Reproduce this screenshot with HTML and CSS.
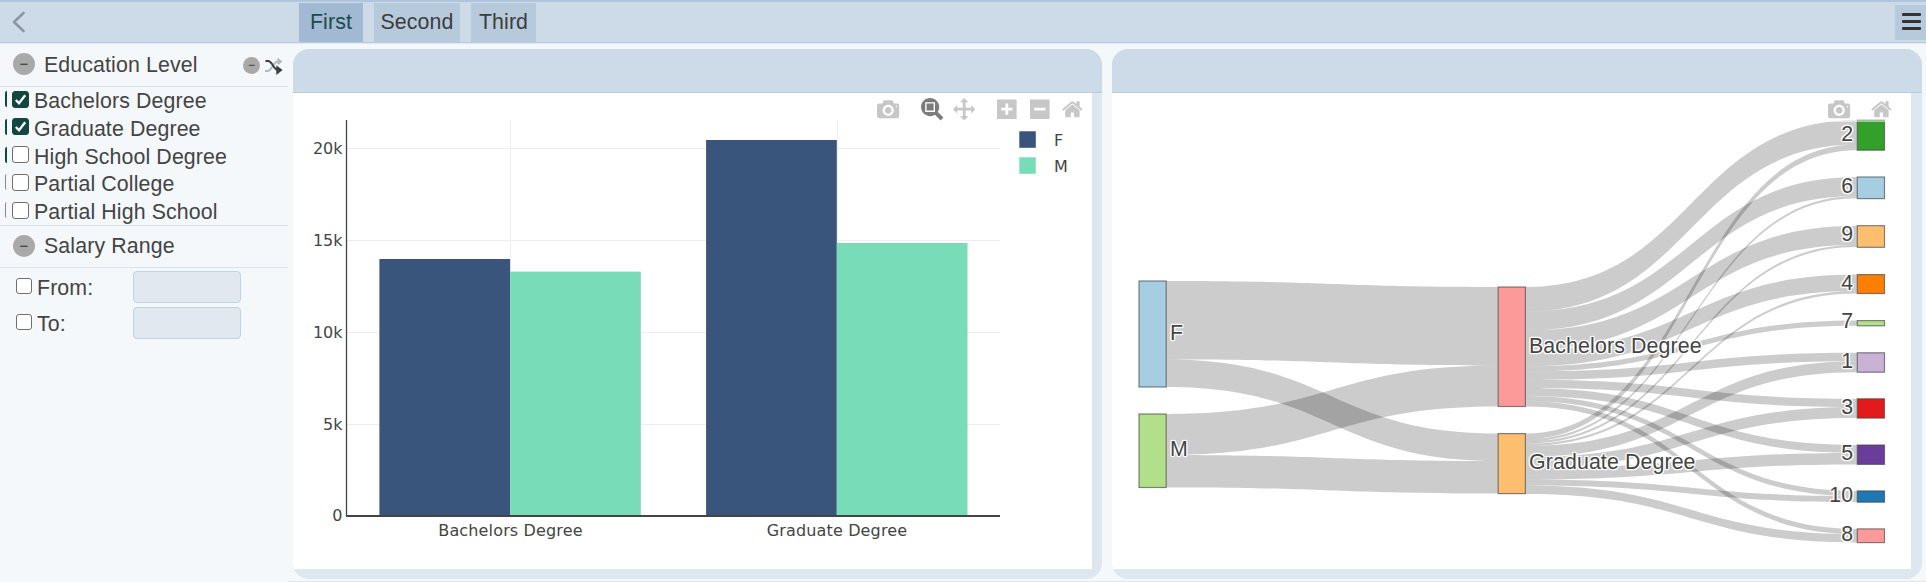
FILE: index.html
```html
<!DOCTYPE html>
<html lang="en">
<head>
<meta charset="utf-8">
<title>Dashboard</title>
<link rel="stylesheet" href="styles.css">
</head>
<body>
<header class="topbar">
  <div class="topbar-side">
    <svg class="chevron" width="14" height="22" viewBox="0 0 14 22"><path d="M11.500 2 2 11l9.500 9"/></svg>
  </div>
  <nav class="tabs">
    <span class="tab tab-first active">First</span>
    <span class="tab tab-second">Second</span>
    <span class="tab tab-third">Third</span>
  </nav>
  <div class="menu-button"><i></i><i></i><i></i></div>
</header>
<div class="workspace">
  <aside class="sidebar">
    <div class="group-head">
      <span class="round">−</span><span class="group-title">Education Level</span>
      <span class="round small">−</span>
      <svg class="shuffle" width="18" height="16" viewBox="0 0 18 16">
        <path class="pale" d="M0 13h2.500C7 13 8 3.500 13 3.500h2M12.500 .8 15.800 3.500l-3.300 2.700"/>
        <path class="dark" d="M.5 3H3c4.500 0 5.500 9 10 9h2M12.300 9.200l3.700 2.900-3.700 2.900z"/>
      </svg>
    </div>
    <div class="options">
      <label class="option"><i class="sliver on"></i><span class="box checked"><svg viewBox="0 0 16 16"><path d="M3 8.500 6.400 12 13 3.500"/></svg></span>Bachelors Degree</label>
      <label class="option"><i class="sliver on"></i><span class="box checked"><svg viewBox="0 0 16 16"><path d="M3 8.500 6.400 12 13 3.500"/></svg></span>Graduate Degree</label>
      <label class="option"><i class="sliver on"></i><span class="box"></span>High School Degree</label>
      <label class="option"><i class="sliver"></i><span class="box"></span>Partial College</label>
      <label class="option"><i class="sliver"></i><span class="box"></span>Partial High School</label>
    </div>
    <div class="group-head second">
      <span class="round">−</span><span class="group-title">Salary Range</span>
    </div>
    <div class="range">
      <div class="range-row"><span class="box"></span><span class="range-label">From:</span><span class="field"></span></div>
      <div class="range-row"><span class="box"></span><span class="range-label">To:</span><span class="field"></span></div>
    </div>
  </aside>
  <main class="main">
    <section class="panel">
      <div class="panel-head"></div>
      <div class="panel-body">
        <svg class="plot bars" width="799" height="476" viewBox="293 93 799 476">
          <path class="grid" d="M347 148.500H1000M347 240.500H1000M347 332.500H1000M347 424.500H1000M510.500 120V515M837.500 120V515"/>
          <g class="series-f"><rect x="379.400" y="259" width="130.700" height="257"/><rect x="706.100" y="140" width="130.700" height="376"/></g>
          <g class="series-m"><rect x="510.100" y="271.600" width="130.700" height="244.400"/><rect x="836.800" y="243" width="130.700" height="273"/></g>
          <path class="axis-y" d="M346.500 120V516"/>
          <path class="axis-x" d="M346 516H1000"/>
          <g class="tick end">
            <text x="342.500" y="154">20k</text><text x="342.500" y="246">15k</text><text x="342.500" y="338">10k</text><text x="342.500" y="430">5k</text><text x="342.500" y="521">0</text>
          </g>
          <g class="tick mid"><text x="510.500" y="536">Bachelors Degree</text><text x="837" y="536">Graduate Degree</text></g>
          <g class="series-f"><rect x="1019.300" y="131.300" width="16.500" height="16.500"/></g>
          <g class="series-m"><rect x="1019.300" y="157.300" width="16.500" height="16.500"/></g>
          <g class="tick"><text x="1054" y="146">F</text><text x="1054" y="172">M</text></g>
        </svg>
        <div class="modebar">
          <div class="modebar-group"><svg><use href="#i-camera"/></svg></div>
          <div class="modebar-group"><svg class="active"><use href="#i-zoom"/></svg><svg><use href="#i-pan"/></svg></div>
          <div class="modebar-group"><svg><use href="#i-plus"/></svg><svg><use href="#i-minus"/></svg><svg><use href="#i-home"/></svg></div>
        </div>
      </div>
    </section>
    <section class="panel">
      <div class="panel-head"></div>
      <div class="panel-body">
        <svg class="plot" width="799" height="476" viewBox="1112 93 799 476">
          <g id="links" class="links"></g>
          <g id="nodes" class="nodes"></g>
          <g class="node-labels">
            <text x="1170" y="340">F</text><text x="1170" y="456">M</text>
            <text x="1529" y="353">Bachelors Degree</text><text x="1529" y="469">Graduate Degree</text>
          </g>
          <g class="node-labels end">
            <text x="1853" y="141">2</text><text x="1853" y="193">6</text><text x="1853" y="241">9</text><text x="1853" y="290">4</text><text x="1853" y="328">7</text><text x="1853" y="368">1</text><text x="1853" y="414">3</text><text x="1853" y="460">5</text><text x="1853" y="502">10</text><text x="1853" y="541">8</text>
          </g>
        </svg>
        <div class="modebar">
          <div class="modebar-group"><svg><use href="#i-camera"/></svg></div>
          <div class="modebar-group"><svg><use href="#i-home"/></svg></div>
        </div>
      </div>
    </section>
  </main>
</div>
<svg class="defs" width="0" height="0">
  <defs>
    <symbol id="i-camera" viewBox="0 0 1000 1000"><path transform="matrix(1 0 0 -1 0 850)" d="m500 450c-83 0-150-67-150-150 0-83 67-150 150-150 83 0 150 67 150 150 0 83-67 150-150 150z m400 150h-120c-16 0-34 13-39 29l-31 93c-6 15-23 28-40 28h-340c-16 0-34-13-39-28l-31-94c-6-15-23-28-40-28h-120c-55 0-100-45-100-100v-450c0-55 45-100 100-100h800c55 0 100 45 100 100v450c0 55-45 100-100 100z m-400-550c-138 0-250 112-250 250 0 138 112 250 250 250 138 0 250-112 250-250 0-138-112-250-250-250z m365 380c-19 0-35 16-35 35 0 19 16 35 35 35 19 0 35-16 35-35 0-19-16-35-35-35z"/></symbol>
    <symbol id="i-zoom" viewBox="0 0 1000 1000" overflow="visible"><path transform="matrix(1 0 0 -1 0 850)" d="m1000-25l-250 251c40 63 63 138 63 218 0 224-182 406-407 406-224 0-406-182-406-406s183-406 407-406c80 0 155 22 218 62l250-250 125 125z m-812 250l0 438 437 0 0-438-437 0z m62 375l313 0 0-312-313 0 0 312z"/></symbol>
    <symbol id="i-pan" viewBox="0 0 1000 1000"><path transform="matrix(1 0 0 -1 0 850)" d="m1000 350l-187 188 0-125-250 0 0 250 125 0-188 187-187-187 125 0 0-250-250 0 0 125-188-188 186-187 0 125 252 0 0-250-125 0 187-188 188 188-125 0 0 250 250 0 0-126 187 188z"/></symbol>
    <symbol id="i-plus" viewBox="0 0 1000 1000"><path transform="matrix(1 0 0 -1 0 850)" d="m1 787l0-875 875 0 0 875-875 0z m687-500l-187 0 0-187-125 0 0 187-188 0 0 125 188 0 0 187 125 0 0-187 187 0 0-125z"/></symbol>
    <symbol id="i-minus" viewBox="0 0 1000 1000"><path transform="matrix(1 0 0 -1 0 850)" d="m0 788l0-876 875 0 0 876-875 0z m688-500l-500 0 0 125 500 0 0-125z"/></symbol>
    <symbol id="i-home" viewBox="0 0 1000 1000"><path transform="matrix(1 0 0 -1 0 850)" d="m786 296v-267q0-15-11-26t-25-10h-214v214h-143v-214h-214q-15 0-25 10t-11 26v267q0 1 0 2t0 2l321 264 321-264q1-1 1-4z m124 39l-34-41q-5-5-12-6h-2q-7 0-12 3l-386 322-386-322q-7-4-13-4-7 2-12 7l-35 41q-4 5-3 12t6 11l401 334q18 15 42 15t43-15l136-114v109q0 8 5 13t13 5h107q8 0 13-5t5-13v-227l122-102q5-4 6-11t-4-13z"/></symbol>
  </defs>
</svg>
<script src="sankey.js"></script>
</body>
</html>
```

FILE: styles.css
```css
* { box-sizing: border-box; }
html, body { height: 100%; }
body {
  margin: 0;
  display: flex;
  flex-direction: column;
  overflow: hidden;
  background: #f4f8fb;
  color: #444;
  font: 21.330px/26px "Liberation Sans", Arial, sans-serif;
  letter-spacing: .12px;
}
.defs { position: absolute; }

.topbar {
  flex: none;
  display: flex;
  height: 44px;
  background: #cddae7;
  border-top: 2px solid #b0c4de;
  border-bottom: 1px solid #dfe8f1;
  box-shadow: inset 0 -1px #b7cade;
}
.topbar-side { width: 299px; padding: 8.500px 0 0 12px; }
.chevron { display: block; }
.chevron path { fill: none; stroke: #8b98a3; stroke-width: 2.600; stroke-linecap: round; stroke-linejoin: round; }
.tabs { flex: 1; display: flex; gap: 11px; padding-top: 1px; }
.tab { height: 39px; padding-top: 6px; text-align: center; background: #b7cadc; color: #3c3c3c; }
.tab-first { width: 64px; }
.tab-second { width: 86px; }
.tab-third { width: 65px; }
.tab.active { background: #a2b9d3; color: #1b4b4b; }
.menu-button {
  width: 31px;
  height: 35px;
  margin-top: 3px;
  padding: 8px 5px 0 7px;
  display: flex;
  flex-direction: column;
  gap: 4.500px;
  background: #b7cadc;
}
.menu-button i { height: 2.500px; border-radius: 1px; background: #333; flex: none; }

.workspace { flex: 1; display: flex; min-height: 0; }
.sidebar { width: 288px; flex: none; }
.group-head {
  display: flex;
  align-items: center;
  height: 43px;
  padding: 0 5px 1px 13px;
  border-bottom: 1px solid #dbe4ee;
}
.round {
  width: 22px;
  height: 22px;
  margin-top: -1px;
  border-radius: 50%;
  background: #a9a9a9;
  color: #333;
  font-size: 15px;
  line-height: 21px;
  text-align: center;
}
.round.small { width: 17px; height: 17px; margin-top: 2px; font-size: 12px; line-height: 16px; }
.group-title { flex: 1; margin-left: 9px; }
.shuffle { margin: 2px 0 0 5px; overflow: visible; }
.shuffle path { fill: none; stroke-width: 2; }
.shuffle .pale { stroke: #b5b8bb; }
.shuffle .dark { stroke: #3c3f42; }
.options { height: 139px; padding-top: 1px; border-bottom: 1px solid #dbe4ee; }
.option { display: flex; height: 27.800px; padding-left: 5px; line-height: 26px; }
.sliver { width: 2px; height: 16px; margin: 3px 5px 0 0; border-left: 1.500px solid #888; border-radius: 3px 0 0 3px; }
.sliver.on { border-left: 2px solid #134640; }
.box {
  flex: none;
  width: 17px;
  height: 17px;
  margin: 2.500px 5px 0 0;
  background: #fff;
  border: 1px solid #6f6f6f;
  border-radius: 3px;
}
.box.checked { background: #134640; border-color: #134640; }
.box svg { display: block; width: 15px; height: 15px; }
.box path { fill: none; stroke: #fff; stroke-width: 2.500; }
.group-head.second { height: 42px; padding-bottom: 1px; }
.range { padding: 3px 0 0 16px; display: flex; flex-direction: column; gap: 4px; }
.range-row { display: flex; height: 32px; }
.range-row .box { width: 16px; margin: 7px 5px 0 0; height: 16px; }
.range-label { width: 96px; padding-top: 4px; }
.field { width: 108px; height: 32px; background: #e1e8f0; border: 1px solid #c2d2e5; border-radius: 4px; }

.main {
  flex: 1;
  display: flex;
  gap: 10px;
  padding: 5px 4px 2px 5px;
  border-bottom: 1px solid #dfe7f0;
  min-width: 0;
}
.panel { flex: none; width: 809px; height: 530px; border-radius: 16px; background: #dee6f0; overflow: hidden; }
.panel + .panel { width: 810px; }
.panel-head { height: 44px; background: #cddae7; border-bottom: 1px solid #b7cade; }
.panel-body { position: relative; width: 799px; height: 476px; background: #fff; }
.plot { display: block; }

.grid { stroke: #eee; fill: none; }
.series-f { fill: #39557b; }
.series-m { fill: #79dcb9; }
.axis-y { stroke: #444; stroke-width: 1.300; }
.axis-x { stroke: #444; stroke-width: 2; }
.tick { font: 16px "DejaVu Sans", Verdana, sans-serif; fill: #444; }
.end { text-anchor: end; letter-spacing: 0; }
.mid { text-anchor: middle; letter-spacing: .15px; }

.links { fill: rgba(0, 0, 0, .2); }
.nodes { stroke: #444; stroke-opacity: .65; stroke-width: 1.200; }
.node-labels {
  fill: #444;
  text-shadow: 0 1px 1px #fff, 0 -1px 1px #fff, 1px 0 1px #fff, -1px 0 1px #fff, 1px 1px 1px #fff, -1px -1px 1px #fff, 1px -1px 1px #fff, -1px 1px 1px #fff;
}

.modebar {
  position: absolute;
  top: 2px;
  right: 3.300px;
  height: 26.500px;
  padding: 2.600px 4px 0 6px;
  display: flex;
  gap: 21px;
  background: rgba(255, 255, 255, .5);
}
.panel + .panel .modebar { right: 13.300px; }
.modebar-group { display: flex; gap: 10.400px; }
.modebar svg { display: block; width: 22.400px; height: 22.400px; fill: rgba(68, 68, 68, .3); overflow: visible; }
.modebar svg.active { fill: rgba(68, 68, 68, .7); }
```

FILE: sankey.js
```js
const NS = "http://www.w3.org/2000/svg";
const W = 27.2;
const nodes = {
  F: [1139, 281, 106, "#a6cee3"],
  M: [1139, 414, 73.5, "#b2df8a"],
  B: [1498.2, 287, 119.5, "#fb9a99"],
  G: [1498.2, 433.6, 60, "#fdbf6f"],
  2: [1857.3, 120, 30.2, "#33a02c"],
  6: [1857.3, 177, 21.6, "#a6cee3"],
  9: [1857.3, 225.7, 21.6, "#fdbf6f"],
  4: [1857.3, 274.6, 18.9, "#ff7f00"],
  7: [1857.3, 320.6, 5.2, "#b2df8a"],
  1: [1857.3, 352.8, 19.4, "#cab2d6"],
  3: [1857.3, 398.8, 19.3, "#e31a1c"],
  5: [1857.3, 445, 19.4, "#6a3d9a"],
  10: [1857.3, 490.9, 11.3, "#1f78b4"],
  8: [1857.3, 528.9, 13.7, "#fb9a99"]
};
const links = [
  ["F", "B", 78.5], ["F", "G", 27.4], ["M", "B", 40.9], ["M", "G", 32.6],
  ["B", 2, 24.6], ["B", 6, 19], ["B", 9, 19.1], ["B", 4, 16.5], ["B", 7, 5.2],
  ["B", 1, 8.4], ["B", 3, 8.3], ["B", 5, 8], ["B", 10, 5.1], ["B", 8, 5.2],
  ["G", 2, 5.6], ["G", 6, 2.3], ["G", 9, 2.3], ["G", 4, 2.3],
  ["G", 1, 11], ["G", 3, 11], ["G", 5, 11.4], ["G", 10, 6], ["G", 8, 8.4]
];

function add(parent, tag, attrs) {
  const el = document.createElementNS(NS, tag);
  for (const k in attrs) el.setAttribute(k, attrs[k]);
  document.getElementById(parent).appendChild(el);
}

// Links stack downwards on each side of a node in list order.
const out = {}, into = {};
for (const [s, t, h] of links) {
  const x0 = nodes[s][0] + W, x1 = nodes[t][0], m = (x0 + x1) / 2;
  const y0 = nodes[s][1] + (out[s] || 0), y1 = nodes[t][1] + (into[t] || 0);
  out[s] = (out[s] || 0) + h;
  into[t] = (into[t] || 0) + h;
  add("links", "path", {
    d: `M${x0},${y0}C${m},${y0} ${m},${y1} ${x1},${y1}L${x1},${y1 + h}C${m},${y1 + h} ${m},${y0 + h} ${x0},${y0 + h}Z`
  });
}
for (const key in nodes) {
  const [x, y, height, fill] = nodes[key];
  add("nodes", "rect", { x, y, width: W, height, fill });
}
```
